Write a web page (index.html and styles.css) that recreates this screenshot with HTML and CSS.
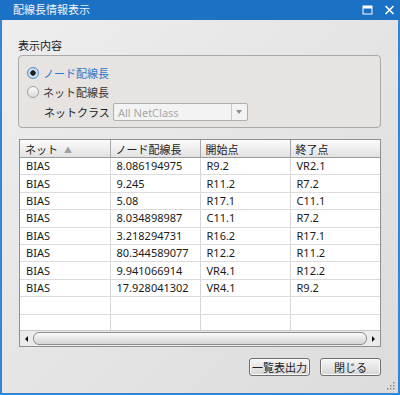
FILE: index.html
```html
<!DOCTYPE html>
<html>
<head>
  <title>配線長情報表示</title>
  <link rel="stylesheet" href="styles.css">
</head>
<body>
  <div class="window">
    <div class="titlebar">
      <span class="title">配線長情報表示</span>
      <span class="title-buttons">
        <svg class="tb-icon" width="11" height="10" viewBox="0 0 11 10">
          <rect x="1" y="1" width="9" height="8" fill="none" stroke="#fff" stroke-width="1"/>
          <rect x="1" y="1" width="9" height="2.5" fill="#fff"/>
        </svg>
        <svg class="tb-icon" width="11" height="10" viewBox="0 0 11 10">
          <path d="M1.5 1 L9.5 9 M9.5 1 L1.5 9" stroke="#fff" stroke-width="1.6"/>
        </svg>
      </span>
    </div>

    <div class="content">
      <div class="group-label">表示内容</div>
      <div class="group">
        <label class="radio-row checked"><span class="radio"></span>ノード配線長</label>
        <label class="radio-row"><span class="radio"></span>ネット配線長</label>
        <div class="netclass-row">
          <span class="netclass-label">ネットクラス</span>
          <div class="combo">
            <span class="combo-text">All NetClass</span>
            <span class="combo-arrow"></span>
          </div>
        </div>
      </div>

      <div class="grid">
        <div class="grid-body">
          <table>
            <colgroup>
              <col class="c1"><col class="c2"><col class="c3"><col class="c4">
            </colgroup>
            <thead>
              <tr>
                <th>ネット <span class="sort">&#9650;</span></th>
                <th>ノード配線長</th>
                <th>開始点</th>
                <th>終了点</th>
              </tr>
            </thead>
            <tbody>
              <tr><td>BIAS</td><td>8.086194975</td><td>R9.2</td><td>VR2.1</td></tr>
              <tr><td>BIAS</td><td>9.245</td><td>R11.2</td><td>R7.2</td></tr>
              <tr><td>BIAS</td><td>5.08</td><td>R17.1</td><td>C11.1</td></tr>
              <tr><td>BIAS</td><td>8.034898987</td><td>C11.1</td><td>R7.2</td></tr>
              <tr><td>BIAS</td><td>3.218294731</td><td>R16.2</td><td>R17.1</td></tr>
              <tr><td>BIAS</td><td>80.344589077</td><td>R12.2</td><td>R11.2</td></tr>
              <tr><td>BIAS</td><td>9.941066914</td><td>VR4.1</td><td>R12.2</td></tr>
              <tr><td>BIAS</td><td>17.928041302</td><td>VR4.1</td><td>R9.2</td></tr>
              <tr><td></td><td></td><td></td><td></td></tr>
              <tr><td></td><td></td><td></td><td></td></tr>
              <tr><td></td><td></td><td></td><td></td></tr>
            </tbody>
          </table>
        </div>
        <div class="hscroll">
          <span class="arrow-left"></span>
          <span class="thumb"></span>
          <span class="arrow-right"></span>
        </div>
      </div>

      <div class="buttons">
        <button>一覧表出力</button>
        <button>閉じる</button>
      </div>
    </div>
    <div class="grip">
      <svg width="10" height="10" viewBox="0 0 10 10">
        <rect x="7" y="1" width="1.5" height="1.5" fill="#8a8a8a"/>
        <rect x="4" y="4" width="1.5" height="1.5" fill="#8a8a8a"/>
        <rect x="7" y="4" width="1.5" height="1.5" fill="#8a8a8a"/>
        <rect x="1" y="7" width="1.5" height="1.5" fill="#8a8a8a"/>
        <rect x="4" y="7" width="1.5" height="1.5" fill="#8a8a8a"/>
        <rect x="7" y="7" width="1.5" height="1.5" fill="#8a8a8a"/>
      </svg>
    </div>
  </div>
</body>
</html>
```

FILE: styles.css
```css
body {
  margin: 0;
  font-family: "Noto Sans", "Noto Sans CJK JP", sans-serif;
  font-size: 11px;
  color: #1a1a1a;
}
.window {
  position: relative;
  width: 400px;
  height: 395px;
  box-sizing: border-box;
  border: 2px solid #3585d3;
  border-top: none;
  background: linear-gradient(135deg, #eeeeee 0%, #dcdcdc 100%);
  display: flex;
  flex-direction: column;
}
.titlebar {
  height: 20px;
  margin: 0 -2px;
  background: #1b71c3;
  display: flex;
  align-items: center;
  justify-content: space-between;
  padding: 0 5px 0 13px;
  color: #fff;
}
.title {
  font-size: 11px;
  line-height: 20px;
  color: #f0f6ff;
}
.title-buttons {
  display: flex;
  gap: 11px;
  align-items: center;
}
.tb-icon {
  display: block;
}
.content {
  flex: 1;
  display: flex;
  flex-direction: column;
  padding: 19px 17px 0 16px;
}
.group-label {
  line-height: 14px;
  height: 14px;
  margin-bottom: 2px;
}
.group {
  height: 73px;
  box-sizing: border-box;
  border: 1px solid #a9a9a9;
  border-radius: 4px;
  background: #e6e3e1;
  padding: 7px 0 0 9px;
}
.radio-row {
  display: flex;
  align-items: center;
  height: 19px;
  color: #333;
}
.radio-row.checked {
  color: #2a78c8;
}
.radio {
  width: 12px;
  height: 12px;
  border-radius: 50%;
  border: 1px solid #a0a0a0;
  background: linear-gradient(#fafafa, #dcdcdc);
  margin: 0 4px 0 -1px;
  box-sizing: border-box;
  position: relative;
}
.checked .radio {
  border-color: #5a8fc4;
  background: radial-gradient(circle, #1f1f1f 0 2.4px, #cfe3f7 3px, #a9c9ea 100%);
}
.netclass-row {
  display: flex;
  align-items: center;
  margin-top: 2px;
  padding-left: 16px;
}
.netclass-label {
  width: 69px;
  color: #222;
}
.combo {
  width: 135px;
  height: 18px;
  box-sizing: border-box;
  border: 1px solid #aeaeae;
  border-radius: 2px;
  background: #f3f3f3;
  display: flex;
  align-items: center;
}
.combo-text {
  flex: 1;
  padding-left: 4px;
  color: #a8a8a8;
}
.combo-arrow {
  width: 15px;
  height: 16px;
  border-left: 1px solid #c8c8c8;
  position: relative;
}
.combo-arrow::after {
  content: "";
  position: absolute;
  left: 4px;
  top: 6px;
  border-left: 3.5px solid transparent;
  border-right: 3.5px solid transparent;
  border-top: 4px solid #8c8c8c;
}
.grid {
  margin-top: 11px;
  margin-left: 1px;
  height: 208px;
  box-sizing: border-box;
  border: 1px solid #8f8f8f;
  background: #fff;
  display: flex;
  flex-direction: column;
}
.grid-body {
  height: 191px;
  overflow: hidden;
}
table {
  width: 100%;
  border-collapse: collapse;
  table-layout: fixed;
}
col.c1 { width: 90px; }
col.c2 { width: 90px; }
col.c3 { width: 90px; }
col.c4 { width: auto; }
th {
  height: 17px;
  padding: 0 5px;
  text-align: left;
  font-weight: normal;
  color: #222;
  background: linear-gradient(#fbfbfb, #e2e2e2);
  border-right: 1px solid #a8a8a8;
  border-bottom: 1px solid #9c9c9c;
}
th:last-child {
  border-right: none;
}
.sort {
  color: #a0a0a0;
  font-size: 8px;
  margin-left: 3px;
  vertical-align: 1px;
}
td {
  height: 16.4px;
  padding: 0 6px;
  border-right: 1px solid #d6d6d6;
  border-bottom: 1px solid #dcdcdc;
  white-space: nowrap;
  overflow: hidden;
  line-height: 14px;
}
td:last-child {
  border-right: none;
}
.hscroll {
  height: 15px;
  border-top: 1px solid #c8c8c8;
  background: #ebebeb;
  display: flex;
  align-items: center;
  padding: 0 3px;
}
.arrow-left {
  width: 0;
  height: 0;
  border-top: 3px solid transparent;
  border-bottom: 3px solid transparent;
  border-right: 3px solid #111;
  margin-left: 2px;
}
.thumb {
  flex: 1;
  height: 11px;
  margin: 0 5px 0 5px;
  border: 1px solid #8d8d8d;
  border-radius: 6px;
  background: linear-gradient(#fafafa, #d4d4d4);
}
.arrow-right {
  width: 0;
  height: 0;
  border-top: 3px solid transparent;
  border-bottom: 3px solid transparent;
  border-left: 3px solid #111;
  margin-right: 2px;
}
.buttons {
  display: flex;
  justify-content: flex-end;
  gap: 10px;
  margin-top: 11px;
}
button {
  width: 61px;
  height: 18px;
  padding: 0;
  font-family: inherit;
  font-size: 11px;
  color: #222;
  border: 1px solid #6e6e6e;
  border-radius: 3px;
  box-shadow: inset 0 0 0 1px #fafafa;
  background: linear-gradient(#f6f6f6, #d6d6d6);
}
.grip {
  position: absolute;
  right: 2px;
  bottom: 2px;
  line-height: 0;
}
```
